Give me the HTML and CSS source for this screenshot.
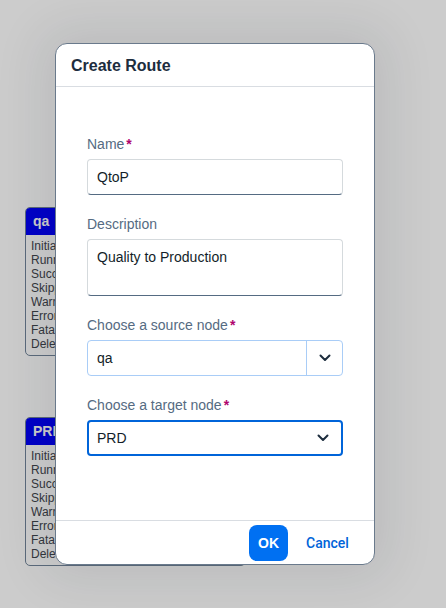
FILE: index.html
```html
<!DOCTYPE html>
<html>
<head>
<meta charset="utf-8">
<link rel="stylesheet" href="styles.css">
</head>
<body>
<div class="canvas">
  <div class="node node-qa">
    <div class="node-head">qa</div>
    <div class="node-body">
      <div>Initial</div><div>Running</div><div>Success</div><div>Skipped</div>
      <div>Warning</div><div>Error</div><div>Fatal</div><div>Deleted</div>
    </div>
  </div>
  <div class="node node-prd">
    <div class="node-head">PRD</div>
    <div class="node-body">
      <div>Initial</div><div>Running</div><div>Success</div><div>Skipped</div>
      <div>Warning</div><div>Error</div><div>Fatal</div><div>Deleted</div>
    </div>
  </div>
  <div class="block-layer"></div>
  <div class="dialog">
    <div class="dialog-header">Create Route</div>
    <div class="dialog-content">
      <div class="field">
        <div class="label">Name<span class="req">*</span></div>
        <div class="input">QtoP</div>
      </div>
      <div class="field">
        <div class="label">Description</div>
        <div class="input textarea">Quality to Production</div>
      </div>
      <div class="field">
        <div class="label">Choose a source node<span class="req">*</span></div>
        <div class="select split">
          <div class="select-value">qa</div>
          <div class="select-btn">
            <svg width="12" height="8" viewBox="0 0 12 8"><path d="M1.5 1.5 L6 6 L10.5 1.5" fill="none" stroke="#1d2d3e" stroke-width="2" stroke-linecap="round" stroke-linejoin="round"/></svg>
          </div>
        </div>
      </div>
      <div class="field">
        <div class="label">Choose a target node<span class="req">*</span></div>
        <div class="select focused">
          <div class="select-value">PRD</div>
          <div class="select-icon">
            <svg width="12" height="8" viewBox="0 0 12 8"><path d="M1.5 1.5 L6 6 L10.5 1.5" fill="none" stroke="#1d2d3e" stroke-width="2" stroke-linecap="round" stroke-linejoin="round"/></svg>
          </div>
        </div>
      </div>
    </div>
    <div class="dialog-footer">
      <button class="btn btn-primary">OK</button>
      <button class="btn btn-transparent">Cancel</button>
    </div>
  </div>
</div>
</body>
</html>
```
FILE: styles.css
```css
html, body {
  margin: 0;
  padding: 0;
}
body {
  width: 446px;
  height: 608px;
  overflow: hidden;
  background: #ffffff;
  font-family: "Liberation Sans", Arial, sans-serif;
}
.canvas {
  position: relative;
  width: 446px;
  height: 608px;
}
.node {
  position: absolute;
  left: 25px;
  width: 219px;
  border: 1px solid #72859a;
  border-radius: 5px;
  background: #ffffff;
  overflow: hidden;
}
.node-qa { top: 207px; }
.node-prd { top: 417px; }
.node-head {
  height: 27px;
  background: #0000fa;
  color: #ffffff;
  font-weight: bold;
  font-size: 14px;
  line-height: 27px;
  padding-left: 7px;
}
.node-body {
  padding: 4px 5px 4px 5px;
  font-size: 12px;
  line-height: 14px;
  color: #3f454d;
}
.block-layer {
  position: absolute;
  inset: 0;
  background: rgba(0, 0, 0, 0.2);
}
.dialog {
  position: absolute;
  left: 55px;
  top: 43px;
  width: 318px;
  height: 520px;
  border: 1px solid #6a7a8c;
  border-radius: 12px;
  background: #ffffff;
  display: flex;
  flex-direction: column;
  overflow: hidden;
  box-shadow: 0 0 50px 14px rgba(20, 30, 45, 0.09);
}
.dialog-header {
  height: 42px;
  flex: none;
  border-bottom: 1px solid #d9dde2;
  padding-left: 15px;
  font-weight: bold;
  font-size: 16px;
  line-height: 43px;
  color: #1d2d3e;
}
.dialog-content {
  flex: 1;
  padding: 47px 31px 0 31px;
  display: flex;
  flex-direction: column;
  gap: 19px;
}
.field {
  display: flex;
  flex-direction: column;
  gap: 5px;
}
.label {
  height: 20px;
  font-size: 14px;
  line-height: 20px;
  color: #556b82;
}
.req {
  color: #b0056e;
  font-weight: bold;
  margin-left: 2px;
}
.input {
  height: 36px;
  box-sizing: border-box;
  border: 1px solid #d5dadd;
  border-bottom-color: #556b82;
  border-radius: 4px;
  padding: 0 9px;
  font-size: 14px;
  line-height: 34px;
  color: #131e29;
}
.textarea {
  height: 57px;
  line-height: 18px;
  padding-top: 8px;
}
.select {
  height: 36px;
  box-sizing: border-box;
  border-radius: 4px;
  display: flex;
  align-items: stretch;
  font-size: 14px;
  color: #131e29;
}
.select.split {
  border: 1px solid #a9cdf7;
}
.select.focused {
  border: 2px solid #0064d9;
}
.select-value {
  flex: 1;
  padding: 0 8px;
  display: flex;
  align-items: center;
}
.select.split .select-value {
  padding-left: 9px;
}
.select-btn {
  width: 35px;
  border-left: 1px solid #a9cdf7;
  display: flex;
  align-items: center;
  justify-content: center;
}
.select-icon {
  width: 36px;
  display: flex;
  align-items: center;
  justify-content: center;
}
.dialog-footer {
  height: 43px;
  flex: none;
  border-top: 1px solid #d9dde2;
  display: flex;
  justify-content: flex-end;
  align-items: center;
  gap: 8px;
  padding: 0 15px;
}
.btn {
  height: 36px;
  border: none;
  border-radius: 8px;
  font-family: inherit;
  font-size: 14px;
  font-weight: bold;
  padding: 0 10px;
  cursor: pointer;
}
.btn-primary {
  background: #0070f2;
  color: #ffffff;
  width: 39px;
  padding: 0;
}
.btn-transparent {
  background: transparent;
  color: #0064d9;
  font-family: Roboto, "Liberation Sans", sans-serif;
  font-weight: 500;
  width: 63px;
  padding: 0;
}
```
